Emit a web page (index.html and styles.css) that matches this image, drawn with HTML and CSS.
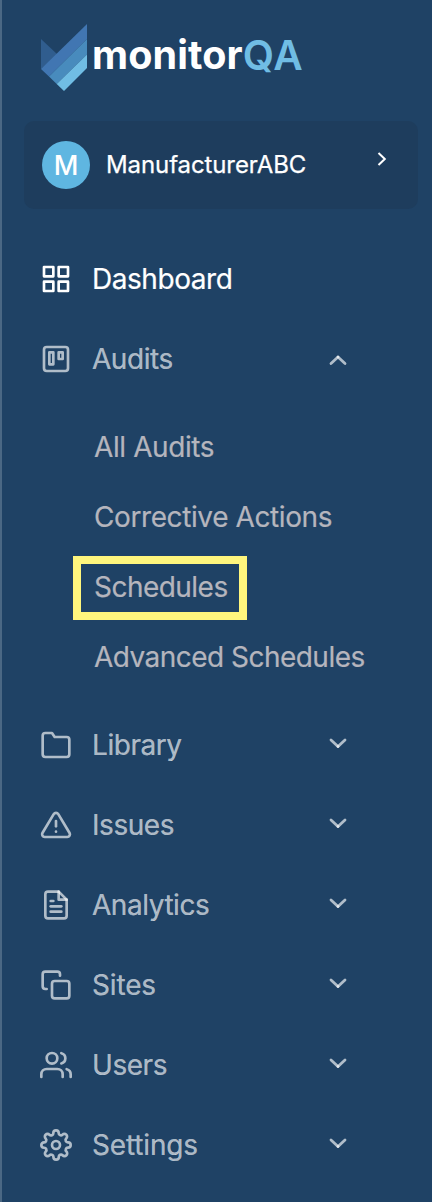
FILE: index.html
```html
<!DOCTYPE html>
<html lang="en">
<head>
<meta charset="utf-8">
<title>monitorQA</title>
<link rel="stylesheet" href="styles.css">
</head>
<body>
<aside class="sidebar">
  <header class="brand">
    <svg class="brand-mark" width="48" height="68" viewBox="0 0 48 68">
      <path fill="#305d8e" d="M1 15v30l17-14z"/>
      <path fill="#4176b2" d="M47 0v15L9 52.500 1 45z"/>
      <path fill="#488bbd" d="M47 15v15.500L16.700 60 9 52.500z"/>
      <path fill="#70bde4" d="M47 30.500V44L24 67l-7.300-7z"/>
    </svg>
    <span class="brand-name">monitor</span><span class="brand-suffix">QA</span>
  </header>
  <div class="account">
    <span class="avatar">M</span>
    <span class="account-name">ManufacturerABC</span>
    <svg class="account-arrow" width="10" height="16" viewBox="0 0 10 16"><path d="M1.500 2l6.300 6-6.300 6"/></svg>
  </div>
  <nav class="menu">
    <a class="item active">
      <svg class="icon" viewBox="0 0 24 24"><rect x="3" y="3" width="7" height="7"/><rect x="14" y="3" width="7" height="7"/><rect x="14" y="14" width="7" height="7"/><rect x="3" y="14" width="7" height="7"/></svg>
      <span class="label">Dashboard</span>
    </a>
    <a class="item">
      <svg class="icon" viewBox="0 0 24 24"><rect x="3" y="3" width="18" height="18" rx="2"/><rect x="7" y="7" width="3" height="9"/><rect x="14" y="7" width="3" height="5"/></svg>
      <span class="label">Audits</span>
      <svg class="chevron open" viewBox="0 0 20 12"><path d="M3 9.500L10 3"/><path d="M10 3l7 6.500"/></svg>
    </a>
    <div class="submenu">
      <a class="subitem loose"><span>All Audits</span></a>
      <a class="subitem loose"><span>Corrective Actions</span></a>
      <a class="subitem"><span class="highlight">Schedules</span></a>
      <a class="subitem"><span>Advanced Schedules</span></a>
    </div>
    <a class="item">
      <svg class="icon" viewBox="0 0 24 24"><path d="M22 19a2 2 0 0 1-2 2H4a2 2 0 0 1-2-2V5a2 2 0 0 1 2-2h5l2 3h9a2 2 0 0 1 2 2z"/></svg>
      <span class="label">Library</span>
      <svg class="chevron" viewBox="0 0 20 12"><path d="M3 3l7 6.500"/><path d="M10 9.500l7-6.500"/></svg>
    </a>
    <a class="item">
      <svg class="icon" viewBox="0 0 24 24"><path d="M10.290 3.860L1.820 18a2 2 0 0 0 1.710 3h16.940a2 2 0 0 0 1.710-3L13.710 3.860a2 2 0 0 0-3.420 0z"/><path d="M12 9v4"/><path d="M12 17h.01"/></svg>
      <span class="label">Issues</span>
      <svg class="chevron" viewBox="0 0 20 12"><path d="M3 3l7 6.500"/><path d="M10 9.500l7-6.500"/></svg>
    </a>
    <a class="item">
      <svg class="icon" viewBox="0 0 24 24"><path d="M14 2H6a2 2 0 0 0-2 2v16a2 2 0 0 0 2 2h12a2 2 0 0 0 2-2V8z"/><path d="M14 2v6h6"/><path d="M16 13H8"/><path d="M16 17H8"/><path d="M10 9H8"/></svg>
      <span class="label">Analytics</span>
      <svg class="chevron" viewBox="0 0 20 12"><path d="M3 3l7 6.500"/><path d="M10 9.500l7-6.500"/></svg>
    </a>
    <a class="item">
      <svg class="icon" viewBox="0 0 24 24"><rect x="9" y="9" width="13" height="13" rx="2"/><path d="M5 15H4a2 2 0 0 1-2-2V4a2 2 0 0 1 2-2h9a2 2 0 0 1 2 2v1"/></svg>
      <span class="label loose">Sites</span>
      <svg class="chevron" viewBox="0 0 20 12"><path d="M3 3l7 6.500"/><path d="M10 9.500l7-6.500"/></svg>
    </a>
    <a class="item">
      <svg class="icon" viewBox="0 0 24 24"><path d="M17 21v-2a4 4 0 0 0-4-4H5a4 4 0 0 0-4 4v2"/><circle cx="9" cy="7" r="4"/><path d="M23 21v-2a4 4 0 0 0-3-3.870"/><path d="M16 3.130a4 4 0 0 1 0 7.750"/></svg>
      <span class="label">Users</span>
      <svg class="chevron" viewBox="0 0 20 12"><path d="M3 3l7 6.500"/><path d="M10 9.500l7-6.500"/></svg>
    </a>
    <a class="item">
      <svg class="icon" viewBox="0 0 24 24"><circle cx="12" cy="12" r="3"/><path d="M19.400 15a1.650 1.650 0 0 0 .33 1.820l.06.060a2 2 0 0 1 0 2.830 2 2 0 0 1-2.830 0l-.06-.06a1.650 1.650 0 0 0-1.820-.33 1.650 1.650 0 0 0-1 1.510V21a2 2 0 0 1-2 2 2 2 0 0 1-2-2v-.09A1.650 1.650 0 0 0 9 19.400a1.650 1.650 0 0 0-1.820.33l-.06.060a2 2 0 0 1-2.830 0 2 2 0 0 1 0-2.830l.06-.06a1.650 1.650 0 0 0 .33-1.820 1.650 1.650 0 0 0-1.510-1H3a2 2 0 0 1-2-2 2 2 0 0 1 2-2h.09A1.650 1.650 0 0 0 4.600 9a1.650 1.650 0 0 0-.33-1.820l-.06-.06a2 2 0 0 1 0-2.830 2 2 0 0 1 2.830 0l.06.060a1.650 1.650 0 0 0 1.820.33H9a1.650 1.650 0 0 0 1-1.510V3a2 2 0 0 1 2-2 2 2 0 0 1 2 2v.09a1.650 1.650 0 0 0 1 1.510 1.650 1.650 0 0 0 1.820-.33l.06-.06a2 2 0 0 1 2.830 0 2 2 0 0 1 0 2.830l-.06.060a1.650 1.650 0 0 0-.33 1.820V9a1.650 1.650 0 0 0 1.510 1H21a2 2 0 0 1 2 2 2 2 0 0 1-2 2h-.09a1.650 1.650 0 0 0-1.510 1z"/></svg>
      <span class="label loose">Settings</span>
      <svg class="chevron" viewBox="0 0 20 12"><path d="M3 3l7 6.500"/><path d="M10 9.500l7-6.500"/></svg>
    </a>
  </nav>
</aside>
</body>
</html>
```
FILE: styles.css
```css
* { box-sizing: border-box; }

body {
  margin: 0;
  background: #1f4265;
  font-family: Inter, "Liberation Sans", sans-serif;
}

.sidebar {
  height: 1202px;
  border-left: 2px solid #4b6884;
  overflow: hidden;
}

.brand {
  display: flex;
  align-items: flex-start;
  height: 121px;
  padding: 24px 0 0 38px;
  font-size: 39.5px;
  line-height: 63px;
}

.brand-mark { flex: none; }

.brand-name {
  margin-left: 4px;
  color: #fff;
  font-weight: 700;
  letter-spacing: 0.1px;
}

.brand-suffix {
  color: #70bde4;
  font-size: 40.5px;
  font-weight: 600;
  letter-spacing: 1px;
}

.account {
  display: flex;
  align-items: center;
  width: 394px;
  height: 88px;
  margin: 0 0 30px 22px;
  padding: 0 31px 0 18px;
  border-radius: 10px;
  background: #1e3d5d;
  color: #fff;
}

.avatar {
  width: 48px;
  height: 48px;
  border-radius: 50%;
  background: #5fb6e1;
  font-size: 27px;
  font-weight: 500;
  line-height: 49px;
  text-align: center;
}

.account-name {
  margin: 0 0 2px 16px;
  font-size: 24px;
  letter-spacing: -0.1px;
  -webkit-text-stroke: 0.25px;
}

.account-arrow {
  margin: 0 0 12px auto;
  fill: none;
  stroke: #fff;
  stroke-width: 2;
}

.item {
  display: flex;
  align-items: center;
  height: 80px;
  padding: 0 82px 0 38px;
  color: rgba(255, 255, 255, 0.65);
  font-size: 28px;
  letter-spacing: -0.45px;
}

.label,
.subitem { -webkit-text-stroke: 0.2px; }

.active { color: #fff; }

.icon {
  width: 32px;
  height: 32px;
  margin-right: 20px;
  fill: none;
  stroke: currentColor;
  stroke-width: 2;
  stroke-linecap: round;
  stroke-linejoin: round;
}

.chevron {
  width: 20px;
  height: 12px;
  margin: 0 2px 4px auto;
  fill: none;
  stroke: currentColor;
  stroke-width: 2.8;
  stroke-linecap: round;
}

.open { margin-bottom: -2px; }

.submenu { padding: 13px 0 13px 92px; }

.subitem {
  display: flex;
  align-items: center;
  height: 70px;
  color: #b5b5bd;
  font-size: 28px;
  letter-spacing: -0.53px;
}

.subitem.loose { letter-spacing: -0.4px; }

.label.loose { letter-spacing: -0.15px; }

.highlight {
  margin: 1px 0 0 -21px;
  padding: 6px 11px 8px 13px;
  border: 8px solid #fff67d;
  line-height: 34px;
}
```
